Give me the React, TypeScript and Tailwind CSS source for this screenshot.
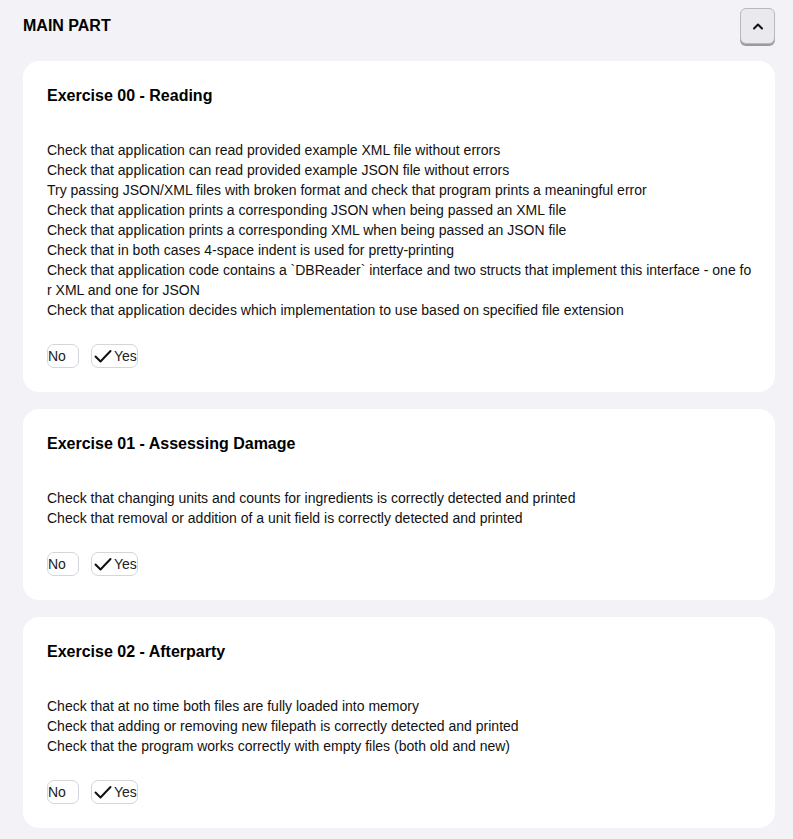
import React from "react";

const exercises = [
  {
    title: "Exercise 00 - Reading",
    lines: [
      "Check that application can read provided example XML file without errors",
      "Check that application can read provided example JSON file without errors",
      "Try passing JSON/XML files with broken format and check that program prints a meaningful error",
      "Check that application prints a corresponding JSON when being passed an XML file",
      "Check that application prints a corresponding XML when being passed an JSON file",
      "Check that in both cases 4-space indent is used for pretty-printing",
      "Check that application code contains a `DBReader` interface and two structs that implement this interface - one for XML and one for JSON",
      "Check that application decides which implementation to use based on specified file extension",
    ],
  },
  {
    title: "Exercise 01 - Assessing Damage",
    lines: [
      "Check that changing units and counts for ingredients is correctly detected and printed",
      "Check that removal or addition of a unit field is correctly detected and printed",
    ],
  },
  {
    title: "Exercise 02 - Afterparty",
    lines: [
      "Check that at no time both files are fully loaded into memory",
      "Check that adding or removing new filepath is correctly detected and printed",
      "Check that the program works correctly with empty files (both old and new)",
    ],
  },
];

function Check() {
  return (
    <svg width="18" height="14" viewBox="0 0 18 14" fill="none" className="shrink-0">
      <path d="M1.5 7.5 L6.5 12.5 L16.5 2" stroke="#111" strokeWidth="2" strokeLinecap="round" strokeLinejoin="round" />
    </svg>
  );
}

export default function App() {
  return (
    <div
      className="min-h-[839px] bg-[#f3f3f7] pl-[23px] pr-[18px] pt-[8px] pb-[11px]"
      style={{ fontFamily: '"Liberation Sans", Arial, sans-serif' }}
    >
      <div className="flex h-[36px] items-center justify-between">
        <h2 className="text-[16px] font-bold text-black">MAIN PART</h2>
        <button className="flex h-[36px] w-[35px] items-center justify-center rounded-[6px] border border-[#b8b8bf] bg-[#e9e9ee] shadow-[0_2px_0_#9a9aa2]">
          <svg width="12" height="8" viewBox="0 0 12 8" fill="none">
            <path d="M2 6.5 L6 2.5 L10 6.5" stroke="#111" strokeWidth="2" strokeLinecap="round" strokeLinejoin="round" />
          </svg>
        </button>
      </div>
      <div className="mt-[17px] flex flex-col gap-[17px]">
        {exercises.map((ex) => (
          <div key={ex.title} className="rounded-[16px] bg-white px-[24px] pt-[24px] pb-[24px]">
            <h3 className="text-[16px] font-bold leading-[22px] text-black">{ex.title}</h3>
            <div className="mt-[33px] mr-[-4px] text-[14px] leading-[20px] text-[#111] break-all">
              {ex.lines.map((l) => (
                <div key={l}>{l}</div>
              ))}
            </div>
            <div className="mt-[24px] flex items-center gap-[12px]">
              <button className="flex h-[24px] w-[32px] items-center overflow-hidden rounded-[7px] border border-[#d4d6dc] bg-white text-[14px] text-[#222]">
                No
              </button>
              <button className="flex h-[24px] w-[47px] items-center gap-[2px] overflow-hidden rounded-[7px] border border-[#d4d6dc] bg-white pl-[2px] text-[14px] text-[#222]">
                <Check />
                <span>Yes</span>
              </button>
            </div>
          </div>
        ))}
      </div>
    </div>
  );
}
